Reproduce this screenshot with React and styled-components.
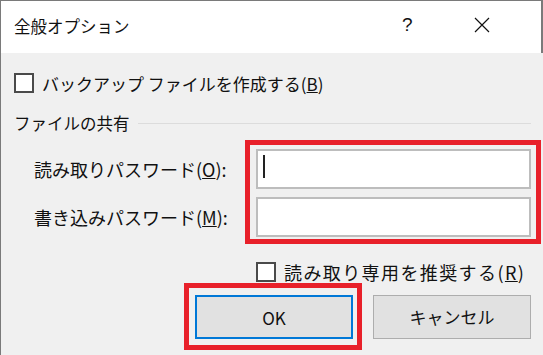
import React from 'react';
import styled, { createGlobalStyle } from 'styled-components';

const GlobalStyle = createGlobalStyle`
    html, body {
        margin: 0;
        padding: 0;
        background: #f0f0f0;
    }
    body {
        font-family: "Noto Sans CJK JP", "Noto Sans", sans-serif;
        color: #111;
    }
`;

const CloseIcon = () => (
    <svg width="16" height="16" viewBox="0 0 16 16">
        <path d="M1 1 L15 15 M15 1 L1 15" stroke="#111" strokeWidth="1.2" fill="none" />
    </svg>
);

const Checkbox = ({ label, accel, size, spacing }) => (
    <CheckRow $size={size} $spacing={spacing}>
        <Box />
        <span>
            {label}(<u>{accel}</u>)
        </span>
    </CheckRow>
);

const App = () => {
    return (
        <Window>
            <GlobalStyle />
            <TitleBar>
                <Title>全般オプション</Title>
                <HelpButton>?</HelpButton>
                <CloseButton><CloseIcon /></CloseButton>
            </TitleBar>
            <Body>
                <BackupRow>
                    <Checkbox label="バックアップ ファイルを作成する" accel="B" size={17} spacing={0} />
                </BackupRow>
                <GroupHeading>
                    <span>ファイルの共有</span>
                    <Rule />
                </GroupHeading>
                <PasswordSection>
                    <Labels>
                        <Label>読み取りパスワード(<u>O</u>):</Label>
                        <Label>書き込みパスワード(<u>M</u>):</Label>
                    </Labels>
                    <Highlight $pad="4px 5px 2px 6px">
                        <TextInput $caret />
                        <TextInput />
                    </Highlight>
                </PasswordSection>
                <ReadOnlyRow>
                    <Checkbox label="読み取り専用を推奨する" accel="R" size={18} spacing={1.4} />
                </ReadOnlyRow>
                <ButtonRow>
                    <Highlight $pad="7px 4px 6px 6px">
                        <Button $primary>OK</Button>
                    </Highlight>
                    <Button>キャンセル</Button>
                </ButtonRow>
            </Body>
        </Window>
    );
};

export default App;

const Window = styled.div`
    width: 543px;
    height: 355px;
    box-sizing: border-box;
    border-left: 1px solid #7a7a7a;
    border-top: 1px solid #7a7a7a;
    display: flex;
    flex-direction: column;
    overflow: hidden;
`;

const TitleBar = styled.div`
    height: 52px;
    background: #fff;
    display: flex;
    align-items: center;
    padding-left: 13px;
    border-right: 2px solid #7a7a7a;
`;

const Title = styled.div`
    font-size: 16.5px;
    flex: 1;
    padding-bottom: 2px;
`;

const HelpButton = styled.div`
    font-family: "Liberation Sans", sans-serif;
    font-size: 19px;
    width: 20px;
    margin-right: 52px;
    padding-bottom: 4px;
`;

const CloseButton = styled.div`
    display: flex;
    margin-right: 51px;
    padding-bottom: 4px;
`;

const Body = styled.div`
    flex: 1;
    background: #f0f0f0;
    display: flex;
    flex-direction: column;
    padding-top: 20px;
    font-size: 17px;
`;

const CheckRow = styled.label`
    display: flex;
    align-items: center;
    gap: 8px;
    height: 20px;
    font-size: ${(props) => props.$size}px;
    letter-spacing: ${(props) => props.$spacing}px;
    white-space: nowrap;
`;

const Box = styled.span`
    width: 20px;
    height: 20px;
    box-sizing: border-box;
    border: 2px solid #4a4a4a;
    background: #fff;
    flex-shrink: 0;
`;

const BackupRow = styled.div`
    padding-left: 13px;
`;

const GroupHeading = styled.div`
    display: flex;
    align-items: center;
    gap: 8px;
    height: 24px;
    margin-top: 18px;
    padding-left: 13px;
    padding-right: 12px;
    font-size: 16.5px;
    white-space: nowrap;
`;

const Rule = styled.div`
    flex: 1;
    height: 1px;
    background: #dcdcdc;
`;

const PasswordSection = styled.div`
    display: flex;
    margin-top: 5px;
`;

const Labels = styled.div`
    width: 244px;
    box-sizing: border-box;
    padding: 9px 0 0 33px;
    display: flex;
    flex-direction: column;
    gap: 8px;
    font-size: 18px;
`;

const Label = styled.div`
    height: 40px;
    display: flex;
    align-items: center;
    white-space: nowrap;
`;

const Highlight = styled.div`
    border: 5px solid #e8202a;
    padding: ${(props) => props.$pad};
    display: flex;
    flex-direction: column;
    gap: 8px;
`;

const TextInput = styled.div`
    width: 275px;
    height: 40px;
    box-sizing: border-box;
    background: #fff;
    border: 2px solid #bdbdbd;
    position: relative;

    &::after {
        content: '';
        display: ${(props) => (props.$caret ? 'block' : 'none')};
        position: absolute;
        left: 5px;
        top: 4px;
        width: 2px;
        height: 23px;
        background: #222;
    }
`;

const ReadOnlyRow = styled.div`
    padding-left: 255px;
    margin-top: 18px;
`;

const ButtonRow = styled.div`
    display: flex;
    align-items: center;
    gap: 11px;
    padding-left: 183px;
    margin-top: 1px;
`;

const Button = styled.div`
    width: 158px;
    height: 44px;
    box-sizing: border-box;
    background: #e1e1e1;
    border: ${(props) => (props.$primary ? '2px solid #0078d7' : '1px solid #adadad')};
    display: flex;
    align-items: center;
    justify-content: center;
    font-size: 17px;
`;
